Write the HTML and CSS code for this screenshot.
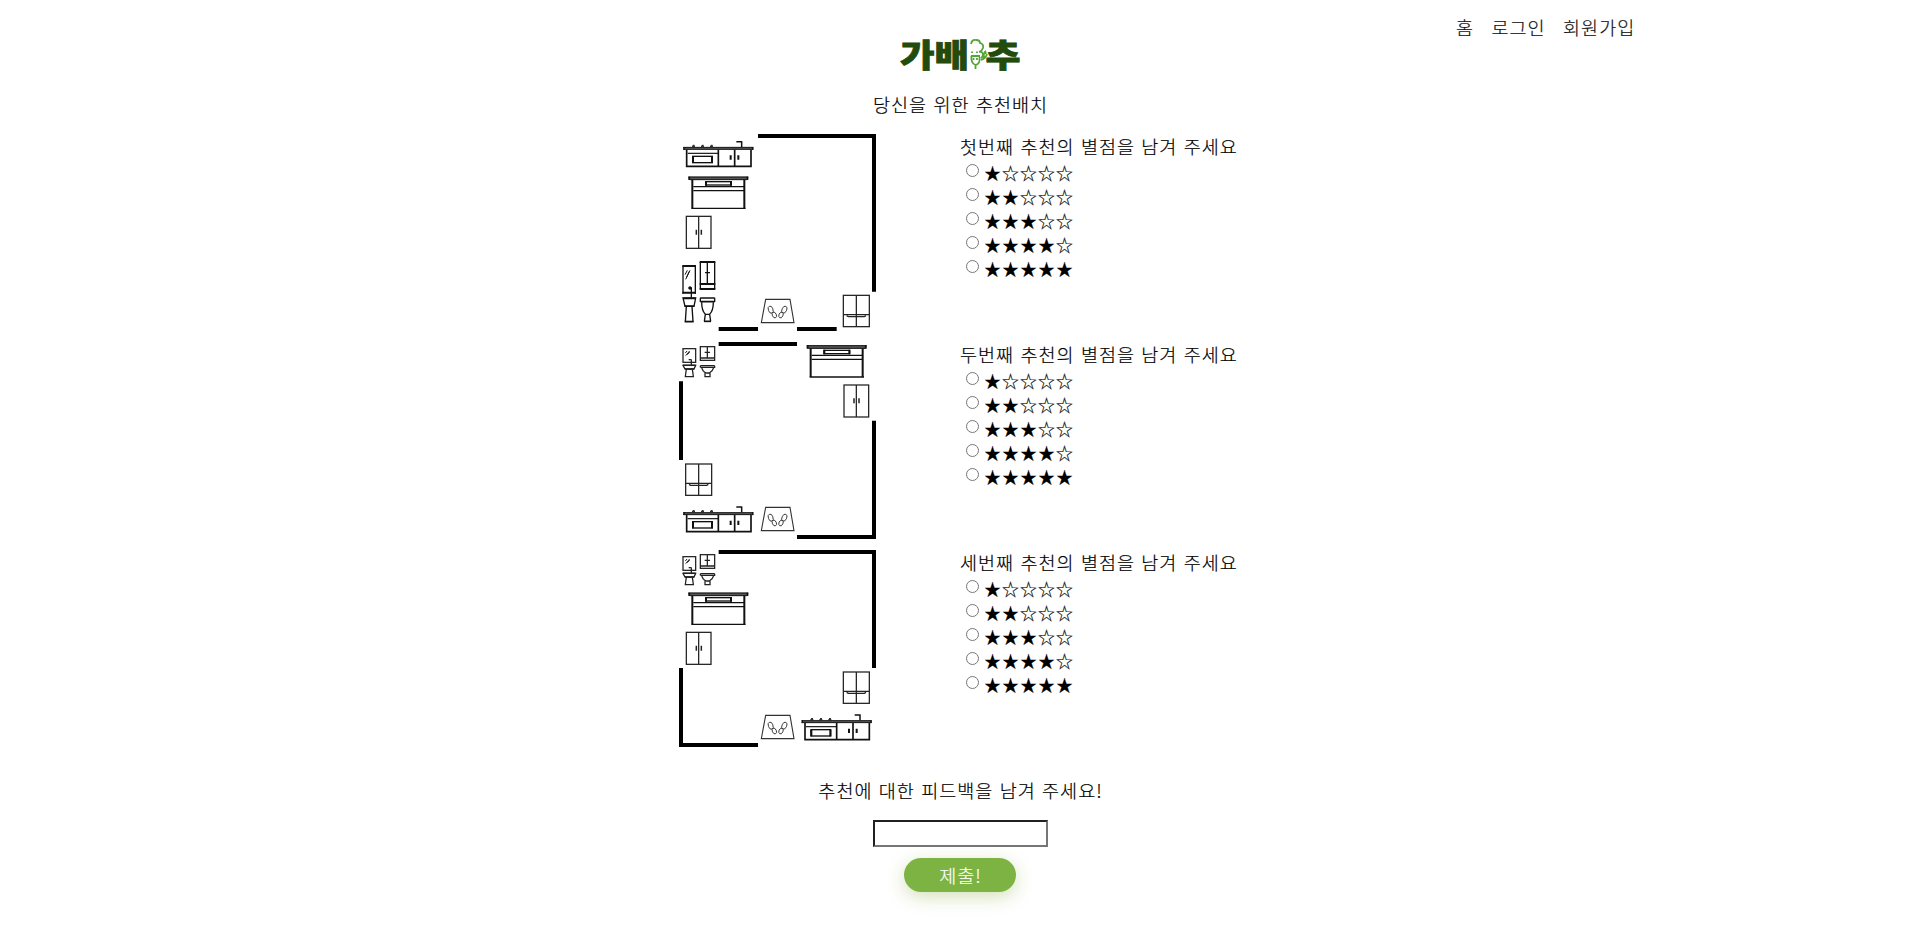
FILE: index.html
```
<!DOCTYPE html>
<html lang="ko">
<head>
<meta charset="utf-8">
<title>가배추</title>
<link rel="stylesheet" href="styles.css">
</head>
<body>
<svg class="defs" width="0" height="0" aria-hidden="true">
<defs>
<g id="kitchen" fill="none" stroke="#111">
<path d="M40 70H250" stroke="#555" stroke-width="8"/><path d="M40 67H250M40 73H250" stroke-width="2.5"/><path d="M42 66v8M248 66v8" stroke-width="4"/>
<path d="M50 74V124H243V74M145 74V124M194 74V124" stroke-width="5"/><path d="M53 85H145" stroke-width="3.5"/>
<rect x="68" y="94" width="59" height="19" stroke-width="4"/><path d="M69 94v20M126 94v20" stroke-width="6"/>
<path d="M182 91v13M205 91v13" stroke-width="6"/><path d="M66 64h9M93 64h9M120 64h9M68 61h6M95 61h6M122 61h6" stroke-width="3"/>
<path d="M215 66V50M217 50H199" stroke-width="4.5"/>
</g>
<g id="desk" fill="none" stroke="#111">
<path d="M55 160H235" stroke="#555" stroke-width="9"/><path d="M55 156H235M60 164H230" stroke-width="3"/><path d="M58 155v10M232 155v10" stroke-width="5"/>
<path d="M67 164V250M223 164V250" stroke-width="6"/><path d="M64 250H227" stroke-width="4"/><path d="M70 185H222M70 197H222" stroke-width="4"/>
<rect x="107" y="170" width="77" height="10" stroke-width="4"/><path d="M108 168v14M183 168v14" stroke-width="6"/>
</g>
<g id="wardrobe" fill="none" stroke="#222" stroke-width="3.8"><rect x="49" y="274" width="74" height="96"/><path d="M86 274V370"/><path d="M79 314v15M94 314v15" stroke-width="4.5"/></g>
<g id="mat" fill="none" stroke="#333" stroke-width="3.3"><path d="M287 523H360L372 593H274Z"/>
<g stroke-width="2.6"><ellipse cx="302" cy="554" rx="7" ry="11" transform="rotate(-20 302 554)"/><ellipse cx="313" cy="570" rx="6" ry="9" transform="rotate(-25 313 570)"/><ellipse cx="343" cy="554" rx="7" ry="11" transform="rotate(25 343 554)"/><ellipse cx="333" cy="570" rx="6" ry="9" transform="rotate(25 333 570)"/></g></g>
<g id="fridge" fill="none" stroke="#222" stroke-width="3.8"><rect x="520" y="511" width="78" height="94"/><path d="M559 511V605M520 569H598"/><path d="M530 572l5 3h48l5-3" stroke-width="4"/></g>
<g id="bath-tall" fill="none" stroke="#111" stroke-width="4">
<path d="M39 422V506M76 422V506"/><path d="M37 423H78M37 503H78" stroke-width="6"/><path d="M45 449l7-13M47 463l13-27M50 456l8-17" stroke-width="3"/>
<path d="M64 518V488M56 489H66" stroke-width="4"/><circle cx="60" cy="489" r="3" fill="#111"/>
<path d="M39 519H77L72 544H45ZM49 544L46 590M66 544L69 590"/><path d="M39 520H77M44 543H73M44 590H71" stroke-width="5"/>
<path d="M91 411V492M134 411V492M112 411V475M105 443h5M114 443h6"/><path d="M89 411H136M89 477H136M89 492H136" stroke-width="6"/>
<path d="M91 519H134M91 530H134" stroke-width="5"/><path d="M91 518V531M134 518V531M95 532C95 553 99 561 106 568H119C126 561 130 553 130 532M106 568L103 589M119 568L122 589" stroke-width="4"/><path d="M102 589H123" stroke-width="5"/>
</g>
<g id="bath" fill="none" stroke="#222" stroke-width="3.8">
<rect x="39" y="41" width="38" height="41"/><path d="M46 54l5-6M47 62l12-14M52 59l7-8" stroke-width="3"/><path d="M64 91V75M56 74H65"/>
<path d="M39 91H77L72 102H45ZM49 103L46 124M67 103L70 124M44 125H72"/><path d="M39 91H77M45 102H72" stroke-width="4.5"/>
<rect x="91" y="35" width="43" height="41"/><path d="M91 69H134M112 35V69M104 52H120"/>
<path d="M91 92H134M91 97H134V92M91 97V92M95 98C98 108 103 112 109 114H118C125 110 129 107 131 98M105 114V124M120 114V124M103 125H122"/>
</g>
</defs>
</svg>

<header class="header">
<svg class="logo" viewBox="895 20 128 64" role="img" aria-label="가배추">
<text class="logo-text" x="900" y="66.5" textLength="69" lengthAdjust="spacingAndGlyphs">가배</text>
<text class="logo-text" x="985.5" y="66.5" textLength="35" lengthAdjust="spacingAndGlyphs">추</text>
<g class="logo-leaf"><path d="M971 44q1-5 5-4 4 0 4 3 4 1 3 5-1 3-4 4M979 52q3-1 4 2 0 3-2 4M984 58q-1-5 2-7M986 54l-1-3M981 60q5-2 6-6M975.500 69v-4q-5-2-4-9M975.500 65q5-1 4-8M971 56h9"/><path d="M972 51.500v1.500M977 51.500v1.500M973.500 58v2M977 58v2"/></g>
</svg>
<nav class="nav"><a>홈</a><a>로그인</a><a>회원가입</a></nav>
</header>

<main class="main">
<p class="title">당신을 위한 추천배치</p>
<section class="item">
<svg class="room" viewBox="27 27 591 591"><path class="wall" d="M264 33H612V500M146 612H264M381 612H500"/><use href="#kitchen"/><use href="#desk"/><use href="#wardrobe"/><use href="#bath-tall"/><use href="#mat"/><use href="#fridge"/></svg>
<div class="rating"><p class="question">첫번째 추천의 별점을 남겨 주세요</p>
<label><input type="radio" name="r1">★☆☆☆☆</label><label><input type="radio" name="r1">★★☆☆☆</label><label><input type="radio" name="r1">★★★☆☆</label><label><input type="radio" name="r1">★★★★☆</label><label><input type="radio" name="r1">★★★★★</label></div>
</section>
<section class="item">
<svg class="room" viewBox="27 21 591 591"><path class="wall" d="M146 27H381M33 139V375M612 257V606H381"/><use href="#bath"/><use href="#desk" x="355" y="-124"/><use href="#wardrobe" x="473" y="-124"/><use href="#fridge" x="-473" y="-124"/><use href="#kitchen" y="466"/><use href="#mat" y="-6"/></svg>
<div class="rating"><p class="question">두번째 추천의 별점을 남겨 주세요</p>
<label><input type="radio" name="r2">★☆☆☆☆</label><label><input type="radio" name="r2">★★☆☆☆</label><label><input type="radio" name="r2">★★★☆☆</label><label><input type="radio" name="r2">★★★★☆</label><label><input type="radio" name="r2">★★★★★</label></div>
</section>
<section class="item">
<svg class="room" viewBox="27 21 591 591"><path class="wall" d="M146 27H612V375M33 375V606H264"/><use href="#bath"/><use href="#desk" y="-6"/><use href="#wardrobe" y="-6"/><use href="#fridge" y="-124"/><use href="#kitchen" x="355" y="466"/><use href="#mat" y="-6"/></svg>
<div class="rating"><p class="question">세번째 추천의 별점을 남겨 주세요</p>
<label><input type="radio" name="r3">★☆☆☆☆</label><label><input type="radio" name="r3">★★☆☆☆</label><label><input type="radio" name="r3">★★★☆☆</label><label><input type="radio" name="r3">★★★★☆</label><label><input type="radio" name="r3">★★★★★</label></div>
</section>
<p class="feedback">추천에 대한 피드백을 남겨 주세요!</p>
<input class="field" type="text">
<button class="submit" type="button">제출!</button>
</main>
</body>
</html>
```
FILE: styles.css
```
body {
  margin: 0;
  background: #fff;
  color: #000;
  font-family: "Noto Sans CJK KR", sans-serif;
  font-size: 18.5px;
  font-weight: 300;
  letter-spacing: 1px;
  word-spacing: 0.2px;
  line-height: 24px;
  -webkit-text-stroke: 0.2px;
}
p { margin: 0; }
.defs { display: block; }
.header {
  display: grid;
  grid-template-columns: 895px 128px 1fr;
  height: 92px;
}
.logo { grid-column: 2; width: 128px; height: 64px; margin-top: 20px; }
.logo-text {
  font-size: 32px;
  font-weight: 900;
  letter-spacing: 0;
  fill: #234b0c;
  stroke: #234b0c;
  stroke-width: 0.8px;
  -webkit-text-stroke: 0.8px #234b0c;
}
.logo-leaf { fill: none; stroke: #52a636; stroke-width: 1.8; }
.nav { display: flex; gap: 17.5px; padding: 15px 0 0 433px; color: #111; }
.main {
  display: flex;
  flex-direction: column;
  align-items: center;
  padding-bottom: 38px;
}
.title { height: 42px; padding-left: 2px; }
.item {
  display: grid;
  grid-template-columns: 197px 280px;
  column-gap: 84px;
  width: 561px;
  height: 208px;
}
.room { width: 197px; height: 197px; }
.wall { fill: none; stroke: #000; stroke-width: 12; }
.rating { white-space: nowrap; }
.question { height: 27px; }
.rating label {
  display: flex;
  height: 24px;
  font-size: 17px;
  letter-spacing: 0.98px;
}
.rating input { width: 13px; height: 13px; margin: 3px 5px 0 6px; }
.feedback { margin-top: 20px; height: 42px; padding-left: 2px; }
.field {
  box-sizing: border-box;
  width: 175px;
  height: 27px;
  margin-left: 1px;
  border: 2px inset #767676;
}
.submit {
  width: 112px;
  height: 34px;
  margin-top: 11px;
  padding: 0 0 0 2px;
  border: 0;
  border-radius: 17px;
  background: #7cb342;
  color: #fff;
  font: inherit;
  letter-spacing: 1px;
  box-shadow: 0 5px 18px rgba(124, 160, 40, .32);
}
```
